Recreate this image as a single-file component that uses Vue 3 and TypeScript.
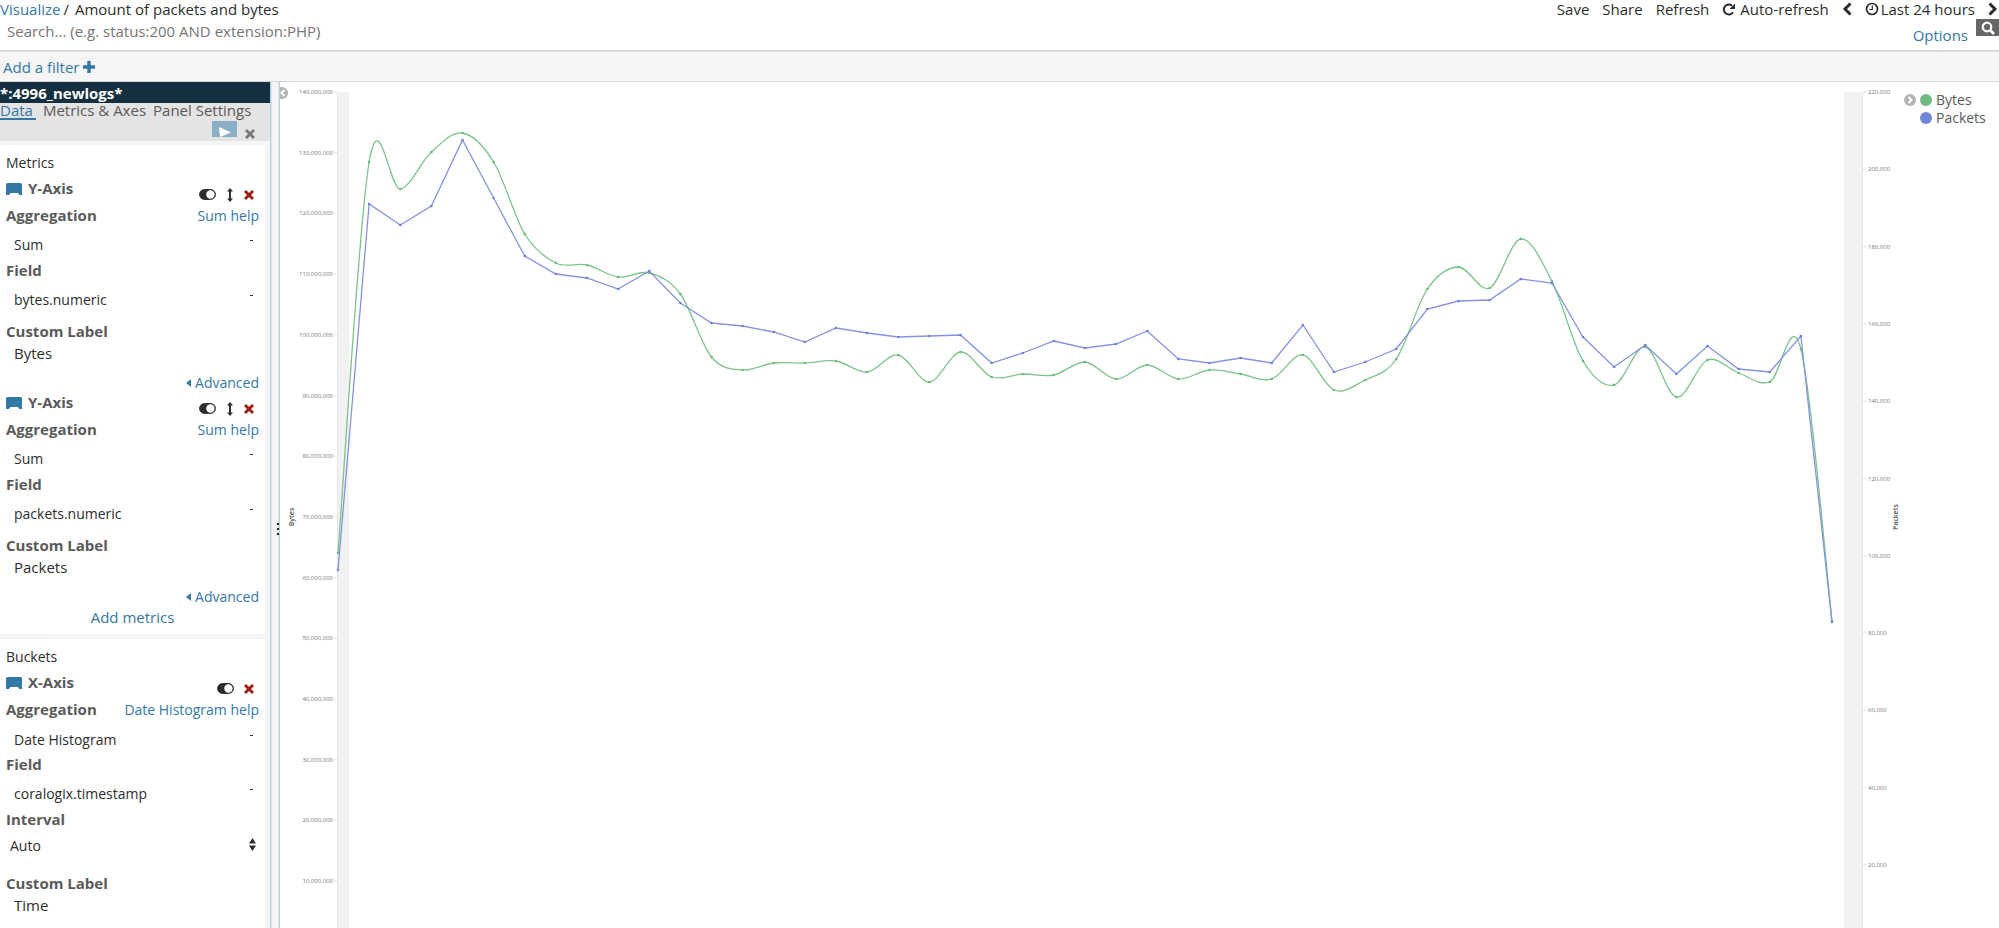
<script setup lang="ts">
interface Field {
  id: string
  label: string
  value: string
  kind: 'select' | 'stepper' | 'text'
  help?: string
}
interface Agg {
  id: string
  title: string
  sortable: boolean
  advanced: boolean
  fields: Field[]
}

const metrics: Agg[] = [
  {
    id: 'm1', title: 'Y-Axis', sortable: true, advanced: true,
    fields: [
      { id: 'm1-agg', label: 'Aggregation', value: 'Sum', kind: 'select', help: 'Sum help' },
      { id: 'm1-field', label: 'Field', value: 'bytes.numeric', kind: 'select' },
      { id: 'm1-label', label: 'Custom Label', value: 'Bytes', kind: 'text' },
    ],
  },
  {
    id: 'm2', title: 'Y-Axis', sortable: true, advanced: true,
    fields: [
      { id: 'm2-agg', label: 'Aggregation', value: 'Sum', kind: 'select', help: 'Sum help' },
      { id: 'm2-field', label: 'Field', value: 'packets.numeric', kind: 'select' },
      { id: 'm2-label', label: 'Custom Label', value: 'Packets', kind: 'text' },
    ],
  },
]
const buckets: Agg[] = [
  {
    id: 'b1', title: 'X-Axis', sortable: false, advanced: false,
    fields: [
      { id: 'b1-agg', label: 'Aggregation', value: 'Date Histogram', kind: 'select', help: 'Date Histogram help' },
      { id: 'b1-field', label: 'Field', value: 'coralogix.timestamp', kind: 'select' },
      { id: 'b1-interval', label: 'Interval', value: 'Auto', kind: 'stepper' },
      { id: 'b1-label', label: 'Custom Label', value: 'Time', kind: 'text' },
    ],
  },
]
const sections = [
  { name: 'Metrics', aggs: metrics, add: 'Add metrics' },
  { name: 'Buckets', aggs: buckets, add: '' },
]

// Plot geometry, in chart units
const top = 10
const zero = 860
const x0 = 58
const xStep = 31.125
const leftTicks = Array.from({ length: 14 }, (_, i) => ({
  text: ((14 - i) * 10_000_000).toLocaleString('en-US'),
  y: top + i * 60.7,
}))
const rightTicks = Array.from({ length: 11 }, (_, i) => ({
  text: ((11 - i) * 20_000).toLocaleString('en-US'),
  y: top + i * 77.3,
}))

type Point = [number, number]
const toPoints = (ys: number[]): Point[] => ys.map((y, i) => [x0 + i * xStep, y])

const bytes = toPoints([
  471, 80, 107, 70, 51, 80, 152, 181, 183, 195, 191, 212, 275, 288, 281, 281, 279, 290, 273, 300,
  270, 295, 292, 293, 280, 297, 283, 297, 288, 292, 297, 273, 308, 298, 277, 207, 185, 206, 157, 199,
  279, 303, 265, 315, 278, 291, 300, 267, 539,
])
const packets = toPoints([
  488, 122, 143, 124, 58, 116, 174, 192, 196, 207, 189, 221, 241, 244, 250, 260, 246, 251, 255, 254,
  253, 281, 271, 259, 266, 262, 249, 277, 281, 276, 281, 243, 290, 280, 267, 227, 219, 218, 197, 201,
  255, 285, 263, 292, 264, 287, 290, 254, 540,
])

const linePath = (pts: Point[]) => 'M' + pts.map((p) => p.join(',')).join('L')

// Cardinal spline; the end points stand in for their missing neighbours
const smoothPath = (pts: Point[]) => {
  const last = pts.length - 1
  const tangent = (i: number): Point => {
    const prev = pts[Math.max(i - 1, 0)]
    const next = pts[Math.min(i + 1, last)]
    return [(next[0] - prev[0]) / 2, (next[1] - prev[1]) / 2]
  }
  let d = `M${pts[0]}`
  for (let i = 0; i < last; i++) {
    const a = tangent(i)
    const b = tangent(i + 1)
    d += `C${pts[i][0] + a[0] / 3},${pts[i][1] + a[1] / 3},${pts[i + 1][0] - b[0] / 3},${pts[i + 1][1] - b[1] / 3},${pts[i + 1]}`
  }
  return d
}
</script>

<template>
  <div class="app">
    <header class="top">
      <div class="bar">
        <nav class="crumbs" aria-label="Breadcrumb">
          <a href="#">Visualize</a><span class="slash">/</span><span>Amount of packets and bytes</span>
        </nav>
        <div class="actions">
          <button type="button">Save</button>
          <button type="button">Share</button>
          <button type="button">Refresh</button>
          <button type="button" class="with-icon">
            <svg width="14" height="13" viewBox="0 0 14 13"><path d="M11 9.3A5 5 0 1 1 10 2.6" fill="none" stroke="currentColor" stroke-width="2" /><path d="M13 .5V6H7.5Z" fill="currentColor" /></svg>
            <span>Auto-refresh</span>
          </button>
          <button type="button" aria-label="Previous period">
            <svg width="10" height="14" viewBox="0 0 10 14"><path d="M8.500 1.500 3 7l5.500 5.500" fill="none" stroke="currentColor" stroke-width="3" /></svg>
          </button>
          <button type="button" class="clock">
            <svg width="14" height="14" viewBox="0 0 14 14"><g fill="none" stroke="currentColor"><circle cx="7" cy="7" r="5.500" stroke-width="1.700" /><path d="M7.300 3.500V7.500H4.500" stroke-width="1.200" /></g></svg>
            <span>Last 24 hours</span>
          </button>
          <button type="button" aria-label="Next period">
            <svg width="10" height="14" viewBox="0 0 10 14"><path d="M1.500 1.500 7 7l-5.500 5.500" fill="none" stroke="currentColor" stroke-width="3" /></svg>
          </button>
        </div>
      </div>
      <form class="search" @submit.prevent>
        <input type="text" aria-label="Search" placeholder="Search... (e.g. status:200 AND extension:PHP)" />
        <a href="#" class="options">Options</a>
        <button type="submit" class="go" aria-label="Search">
          <svg width="14" height="14" viewBox="0 0 14 14"><circle cx="6" cy="6" r="4.300" fill="none" stroke="#fff" stroke-width="2.200" /><path d="M9 9l4 4" stroke="#fff" stroke-width="2.600" /></svg>
        </button>
      </form>
    </header>

    <div class="filters">
      <a href="#">Add a filter
        <svg width="12" height="12" viewBox="0 0 12 12"><path d="M6 0v12M0 6h12" stroke="currentColor" stroke-width="3.400" /></svg>
      </a>
    </div>

    <main class="main">
      <aside class="side">
        <h1>*:4996_newlogs*</h1>
        <div class="tabs-area">
          <nav class="tabs" aria-label="Editor sections">
            <a href="#" class="active">Data</a>
            <a href="#">Metrics &amp; Axes</a>
            <a href="#">Panel Settings</a>
          </nav>
          <div class="apply">
            <button type="button" class="play" aria-label="Apply changes">
              <svg width="12" height="10" viewBox="0 0 12 10"><path d="M0 0 12 5.500 1 10Z" fill="#fff" /></svg>
            </button>
            <button type="button" class="discard" aria-label="Discard changes">
              <svg width="10" height="10" viewBox="0 0 10 10"><path d="M1 1l8 8M9 1 1 9" stroke="currentColor" stroke-width="2.800" /></svg>
            </button>
          </div>
        </div>

        <section v-for="s in sections" :key="s.name" class="card">
          <h2>{{ s.name }}</h2>
          <div v-for="agg in s.aggs" :key="agg.id">
            <div class="head">
              <svg class="badge" width="16" height="12" viewBox="0 0 16 12"><path d="M1.500 0h13Q16 0 16 1.500V12H13.500L12 10H4.500L3 12H0V1.500Q0 0 1.500 0Z" fill="#3478a5" /></svg>
              <h3>{{ agg.title }}</h3>
              <div class="tools">
                <button type="button" aria-label="Toggle">
                  <svg width="17" height="11" viewBox="0 0 17 11"><rect x=".6" y=".6" width="15.800" height="9.800" rx="4.900" fill="#2d2d2d" stroke="#2d2d2d" /><circle cx="11.400" cy="5.500" r="4.200" fill="#fff" /></svg>
                </button>
                <button v-if="agg.sortable" type="button" class="move" aria-label="Reorder">
                  <svg width="6" height="14" viewBox="0 0 6 14"><path d="M3 0 6 3.500H4V10.500H6L3 14 0 10.500H2V3.500H0Z" fill="#2d2d2d" /></svg>
                </button>
                <button type="button" class="remove" aria-label="Remove">
                  <svg width="10" height="10" viewBox="0 0 10 10"><path d="M1 1l8 8M9 1 1 9" stroke="currentColor" stroke-width="2.900" /></svg>
                </button>
              </div>
            </div>
            <div v-for="f in agg.fields" :key="f.id" class="field" :class="[f.kind, { described: f.help, compact: !agg.advanced }]">
              <div class="caption">
                <label :for="f.id">{{ f.label }}</label>
                <a v-if="f.help" href="#">{{ f.help }}</a>
              </div>
              <input v-if="f.kind === 'text'" :id="f.id" type="text" :value="f.value" />
              <div v-else class="picker">
                <select :id="f.id"><option>{{ f.value }}</option></select>
                <svg v-if="f.kind === 'stepper'" width="7" height="13" viewBox="0 0 7 13"><path d="M3.500 0 7 5.500H0ZM3.500 13 0 7.500H7Z" fill="#2d2d2d" /></svg>
                <span v-else class="mark"></span>
              </div>
            </div>
            <a v-if="agg.advanced" href="#" class="advanced">
              <svg width="5" height="8" viewBox="0 0 5 8"><path d="M5 0V8L0 4Z" fill="currentColor" /></svg>
              <span>Advanced</span>
            </a>
          </div>
          <a v-if="s.add" href="#" class="add">{{ s.add }}</a>
        </section>
      </aside>

      <div class="resizer"><i></i><i></i><i></i></div>

      <div class="vis">
        <button type="button" class="collapse" aria-label="Collapse editor">
          <svg width="8" height="12" viewBox="4 0 8 12"><circle cx="6" cy="6" r="6" fill="#b3b3b3" /><path d="M8.500 3 5.500 6l3 3" fill="none" stroke="#fff" stroke-width="2" /></svg>
        </button>
        <svg class="chart" viewBox="0 0 1620 861" role="img" aria-label="Bytes and packets over time">
          <rect x="57" :y="top" width="12" :height="zero - top" fill="#f2f2f2" />
          <rect x="1564" :y="top" width="19" :height="zero - top" fill="#f2f2f2" />
          <path :d="`M57.500 ${top}V${zero}M1582.500 ${top}V${zero}`" stroke="#e6e6e6" />
          <g class="ticks">
            <g v-for="t in leftTicks" :key="t.text">
              <text x="53" :y="t.y + 2" text-anchor="end">{{ t.text }}</text>
              <path :d="`M54 ${t.y}h3`" />
            </g>
            <g v-for="t in rightTicks" :key="t.text">
              <text x="1588" :y="t.y + 2">{{ t.text }}</text>
              <path :d="`M1583 ${t.y}h3`" />
            </g>
          </g>
          <text class="axis" transform="translate(14 435) rotate(-90)">Bytes</text>
          <text class="axis" transform="translate(1618 435) rotate(-90)">Packets</text>
          <g class="series green">
            <path :d="smoothPath(bytes)" />
            <circle v-for="p in bytes" :key="p[0]" :cx="p[0]" :cy="p[1]" r="1.300" />
          </g>
          <g class="series blue">
            <path :d="linePath(packets)" />
            <circle v-for="p in packets" :key="p[0]" :cx="p[0]" :cy="p[1]" r="1.300" />
          </g>
        </svg>
      </div>

      <div class="legend">
        <button type="button" aria-label="Toggle legend">
          <svg width="12" height="12" viewBox="0 0 12 12"><circle cx="6" cy="6" r="6" fill="#b3b3b3" /><path d="M4.500 3l3 3-3 3" fill="none" stroke="#fff" stroke-width="2" /></svg>
        </button>
        <ul>
          <li><i class="dot green"></i>Bytes</li>
          <li><i class="dot blue"></i>Packets</li>
        </ul>
      </div>
    </main>
  </div>
</template>

<style>
body {
  margin: 0;
}
</style>

<style scoped>
.app {
  display: flex;
  flex-direction: column;
  height: 100vh;
  overflow: hidden;
  background: #fff;
  color: #2d2d2d;
  font: 14px/20px "Open Sans", "Noto Sans", sans-serif;
}
h1, h2, h3, ul {
  margin: 0;
  padding: 0;
  list-style: none;
}
a {
  color: #3478a5;
  text-decoration: none;
}
button, input, select {
  margin: 0;
  padding: 0;
  border: 0;
  border-radius: 0;
  background: none;
  color: inherit;
  font: inherit;
  appearance: none;
}
svg {
  display: block;
  flex: none;
}

.top {
  height: 52px;
  flex: none;
  border-bottom: 2px solid #dcdcde;
  box-sizing: border-box;
}
.bar {
  display: flex;
  justify-content: space-between;
  height: 19px;
  font-size: 15px;
  line-height: 18px;
}
.crumbs,
.actions {
  display: flex;
  height: 18px;
}
.slash {
  margin: 0 6px 0 3px;
}
.actions {
  gap: 13px;
  padding-right: 1px;
}
.actions button,
.actions .with-icon {
  display: flex;
  align-items: center;
  gap: 4px;
}
.actions .clock {
  gap: 2px;
}
.search {
  display: flex;
  align-items: flex-start;
}
.search input {
  flex: 1;
  height: 24px;
  padding-left: 7px;
  font-size: 15px;
  outline: 0;
}
.search input::placeholder {
  color: #757575;
  opacity: 1;
}
.options {
  margin: 6px 8px 0 0;
  font-size: 15px;
}
.go {
  display: flex;
  justify-content: center;
  align-items: center;
  width: 23px;
  height: 17px;
  background: #666;
}

.filters {
  flex: none;
  height: 30px;
  padding-left: 3px;
  box-sizing: border-box;
  border-bottom: 1px solid #d9d9dd;
  background: #f5f5f5;
  font-size: 15px;
  line-height: 30px;
}
.filters svg {
  display: inline-block;
}

.main {
  display: flex;
  flex: 1;
  min-height: 0;
}
.side {
  display: flex;
  flex: none;
  flex-direction: column;
  width: 270px;
  overflow: hidden;
  background: #f5f5f7;
}
.side h1 {
  flex: none;
  height: 21px;
  background: #142f40;
  color: #fff;
  font-size: 15px;
  line-height: 22px;
}
.tabs-area {
  flex: none;
  height: 38px;
  margin-bottom: 4px;
  background: #e4e4e4;
}
.tabs {
  display: flex;
  gap: 7px;
}
.tabs a {
  height: 17px;
  color: #5a5a5a;
  font-size: 15px;
  line-height: 15px;
}
.tabs .active {
  padding-right: 3px;
  border-bottom: 2px solid #3478a5;
  box-sizing: border-box;
  color: #3478a5;
}
.apply {
  display: flex;
  justify-content: flex-end;
  gap: 8px;
  padding: 1px 15px 0 0;
}
.play {
  display: flex;
  justify-content: center;
  align-items: flex-end;
  width: 25px;
  height: 16px;
  background: #8aafc7;
}
.discard {
  padding-top: 8px;
  color: #777;
}

.card {
  flex: none;
  width: 253px;
  margin-bottom: 5px;
  padding: 8px 6px 0;
  background: #fff;
}
.card:last-child {
  flex: 1 0 auto;
  margin-bottom: 0;
}
.card h2 {
  height: 26px;
  font-size: 14px;
  font-weight: 400;
}
.head {
  display: flex;
  height: 27px;
}
.badge {
  margin: 4px 6px 0 0;
}
.head h3 {
  color: #5a5a5a;
  font-size: 15px;
  line-height: 18px;
}
.tools {
  display: flex;
  align-items: center;
  gap: 10px;
  height: 31px;
  margin-left: auto;
  padding-right: 5px;
}
.tools .move {
  padding: 0 1px;
}
.tools .remove {
  color: #a01c14;
}
.caption {
  display: flex;
  justify-content: space-between;
  height: 29px;
}
.caption label {
  color: #5a5a5a;
  font-size: 15px;
  font-weight: 700;
  line-height: 18px;
}
.text .caption {
  height: 21px;
}
.stepper .caption {
  height: 26px;
}
.compact.described .caption {
  height: 30px;
}
.picker {
  display: grid;
  grid-template-columns: 1fr auto;
  height: 32px;
}
.compact .picker,
.described .picker {
  height: 26px;
}
.compact.described .picker {
  height: 25px;
}
.picker select {
  height: 20px;
  padding-left: 8px;
}
.stepper .picker {
  height: 38px;
}
.stepper select {
  padding-left: 4px;
}
.picker svg {
  margin: 2px 3px 0 0;
}
.mark {
  width: 3px;
  height: 1px;
  margin: 5px 6px 0 0;
  background: #2d2d2d;
}
.field input {
  display: block;
  width: 100%;
  height: 20px;
  margin-bottom: 9px;
  padding-left: 8px;
  box-sizing: border-box;
  font-size: 15px;
}
.advanced {
  display: flex;
  align-items: center;
  justify-content: flex-end;
  gap: 4px;
  height: 21px;
}
.add {
  display: block;
  height: 27px;
  font-size: 15px;
  text-align: center;
}

.resizer {
  display: flex;
  flex: none;
  flex-direction: column;
  align-items: flex-end;
  justify-content: center;
  gap: 3px;
  width: 10px;
  padding-top: 48px;
  box-sizing: border-box;
  border: 1px solid #b5d3de;
  border-width: 0 1px;
  background: #f5f5f7;
  box-shadow: inset 1px 0 #d5e6ec, inset -1px 0 #d5e6ec;
}
.resizer i {
  width: 2px;
  height: 2px;
  background: #222;
}

.vis {
  position: relative;
  flex: 1;
  min-width: 0;
}
.chart {
  width: 100%;
}
.collapse {
  position: absolute;
  top: 5px;
  left: 0;
}
.ticks text {
  fill: #777;
  font-size: 6px;
}
.ticks path {
  stroke: #ddd;
}
.axis {
  fill: #555;
  font-size: 7px;
  font-weight: 600;
  text-anchor: middle;
}
.series path {
  fill: none;
  stroke-width: 1.3;
}
.series circle {
  stroke: none;
}
.series.green {
  stroke: #7cc48a;
  fill: #6eba7c;
}
.series.blue {
  stroke: #8493e0;
  fill: #6f80d5;
}

.legend {
  display: flex;
  flex: none;
  gap: 4px;
  width: 99px;
  padding: 9px 0 0 4px;
  box-sizing: border-box;
  color: #5a5a5a;
}
.legend button {
  height: 18px;
}
.legend li {
  display: flex;
  align-items: center;
  gap: 4px;
  height: 18px;
}
.dot {
  width: 12px;
  height: 12px;
  border-radius: 50%;
}
.dot.green {
  background: #6fbb7f;
}
.dot.blue {
  background: #7086d6;
}
</style>
